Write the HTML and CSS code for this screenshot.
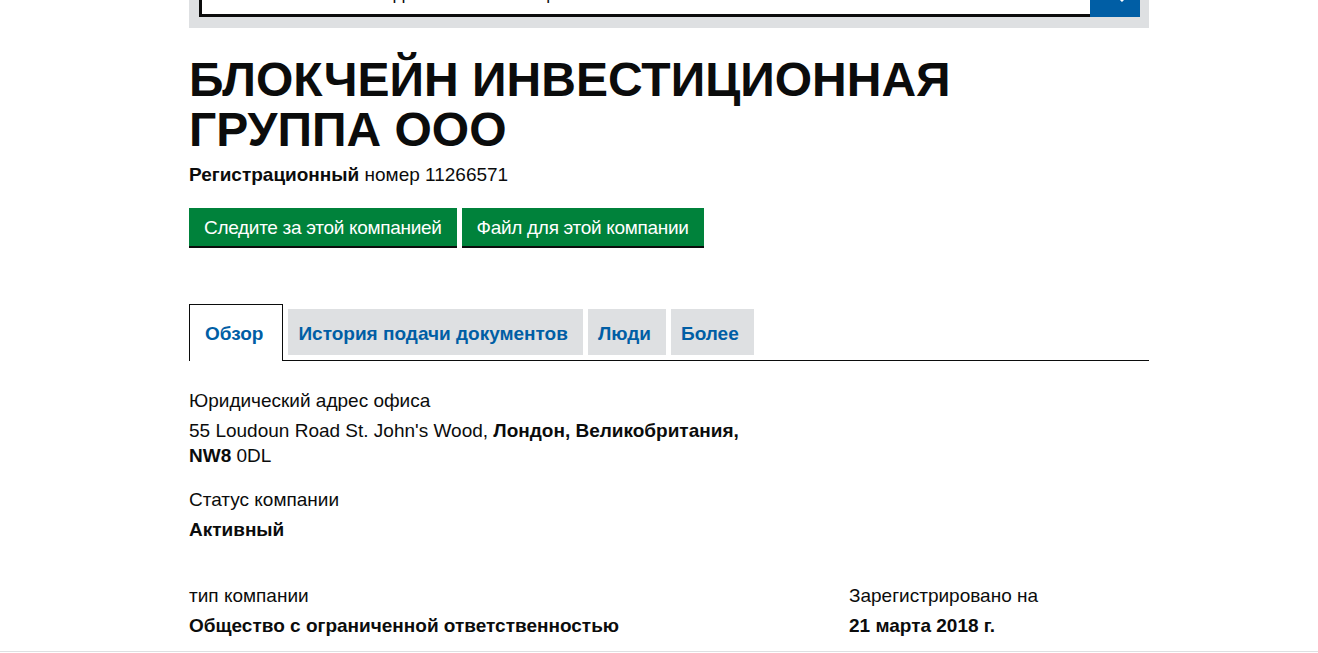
FILE: index.html
```html
<!DOCTYPE html>
<html lang="ru">
<head>
<meta charset="utf-8">
<title>БЛОКЧЕЙН ИНВЕСТИЦИОННАЯ ГРУППА ООО</title>
<link rel="stylesheet" href="styles.css">
</head>
<body>
<div class="page">
  <div class="container">
    <form class="search">
      <div class="search-input">Поиск компаний или должностных лиц</div>
      <button type="button" class="search-btn" aria-label="Поиск">
        <svg width="20" height="20" viewBox="0 0 20 20"><circle cx="8" cy="8" r="6" fill="none" stroke="#fff" stroke-width="3"/><path d="M12.5 12.5 L18 18" stroke="#fff" stroke-width="3"/></svg>
      </button>
    </form>

    <h1 class="title">БЛОКЧЕЙН ИНВЕСТИЦИОННАЯ ГРУППА ООО</h1>
    <p class="regnum"><strong>Регистрационный</strong> номер 11266571</p>

    <div class="actions">
      <a class="button" href="#">Следите за этой компанией</a>
      <a class="button" href="#">Файл для этой компании</a>
    </div>

    <ul class="tabs">
      <li class="tab active"><a href="#">Обзор</a></li>
      <li class="tab"><a href="#">История подачи документов</a></li>
      <li class="tab"><a href="#">Люди</a></li>
      <li class="tab"><a href="#">Более</a></li>
    </ul>

    <dl class="facts">
      <dt>Юридический адрес офиса</dt>
      <dd class="address">55 Loudoun Road St. John's Wood, <b>Лондон, Великобритания,</b><br><b>NW8</b> 0DL</dd>
      <dt>Статус компании</dt>
      <dd><b>Активный</b></dd>
    </dl>

    <div class="two-col">
      <dl class="facts small">
        <dt>тип компании</dt>
        <dd><b>Общество с ограниченной ответственностью</b></dd>
      </dl>
      <dl class="facts small">
        <dt>Зарегистрировано на</dt>
        <dd><b>21 марта 2018 г.</b></dd>
      </dl>
    </div>
  </div>
  <div class="footer-line"></div>
</div>
</body>
</html>
```

FILE: styles.css
```css
* { box-sizing: border-box; }

html, body {
  margin: 0;
  padding: 0;
  background: #fff;
  color: #0b0c0c;
  font-family: "Liberation Sans", Arial, sans-serif;
  overflow: hidden;
}

.container {
  width: 980px;
  margin: 0 auto;
  padding-left: 20px;
}

.search {
  display: flex;
  margin: -33px 0 0 0;
  padding: 10px 9px 11px 10px;
  background: #dee0e2;
}

.search-input {
  flex: 1;
  height: 40px;
  border: 3px solid #0b0c0c;
  border-right: 0;
  background: #fff;
  font-size: 19px;
  line-height: 25px;
  padding: 0 6px;
  color: #0b0c0c;
  overflow: hidden;
  white-space: nowrap;
}

.search-btn {
  width: 50px;
  height: 40px;
  border: 0;
  margin: 0;
  padding: 6px 0 0;
  background: #005ea5;
  display: flex;
  align-items: flex-start;
  justify-content: center;
}

.title {
  margin: 27px 0 0;
  font-size: 48px;
  line-height: 50px;
  font-weight: 700;
  width: 800px;
}

.regnum {
  margin: 7px 0 0;
  font-size: 19px;
  line-height: 25px;
}

.actions {
  display: flex;
  gap: 5px;
  margin-top: 21px;
}

.button {
  display: block;
  background: #00823b;
  color: #fff;
  text-decoration: none;
  font-size: 19px;
  line-height: 25px;
  letter-spacing: -0.3px;
  padding: 7px 15px 6px;
  box-shadow: 0 2px 0 #0b0c0c;
}

.tabs {
  list-style: none;
  margin: 58px 0 0;
  padding: 0;
  display: flex;
  align-items: flex-end;
  border-bottom: 1px solid #0b0c0c;
}

.tab {
  margin: 0 5px 5px 0;
  background: #dee0e2;
  padding: 12px 15px 9px 10px;
  font-size: 19px;
  line-height: 25px;
  font-weight: 700;
}

.tab a {
  color: #005ea5;
  text-decoration: none;
}

.tab.active {
  background: #fff;
  border: 1px solid #0b0c0c;
  border-bottom: 0;
  margin-bottom: -1px;
  padding: 16px 19px 15px 15px;
}

.facts {
  margin: 27px 0 0;
  font-size: 19px;
  line-height: 25px;
}

.facts dt {
  margin: 0 0 5px;
}

.facts dd {
  margin: 0 0 19px;
}

.facts dd:last-child {
  margin-bottom: 0;
}

.address {
  width: 560px;
}

.two-col {
  display: grid;
  grid-template-columns: 660px 1fr;
  margin-top: 41px;
}

.two-col .facts {
  margin: 0;
}

.footer-line {
  margin-top: 13px;
  border-top: 1px solid #dee0e2;
  height: 40px;
}
```
